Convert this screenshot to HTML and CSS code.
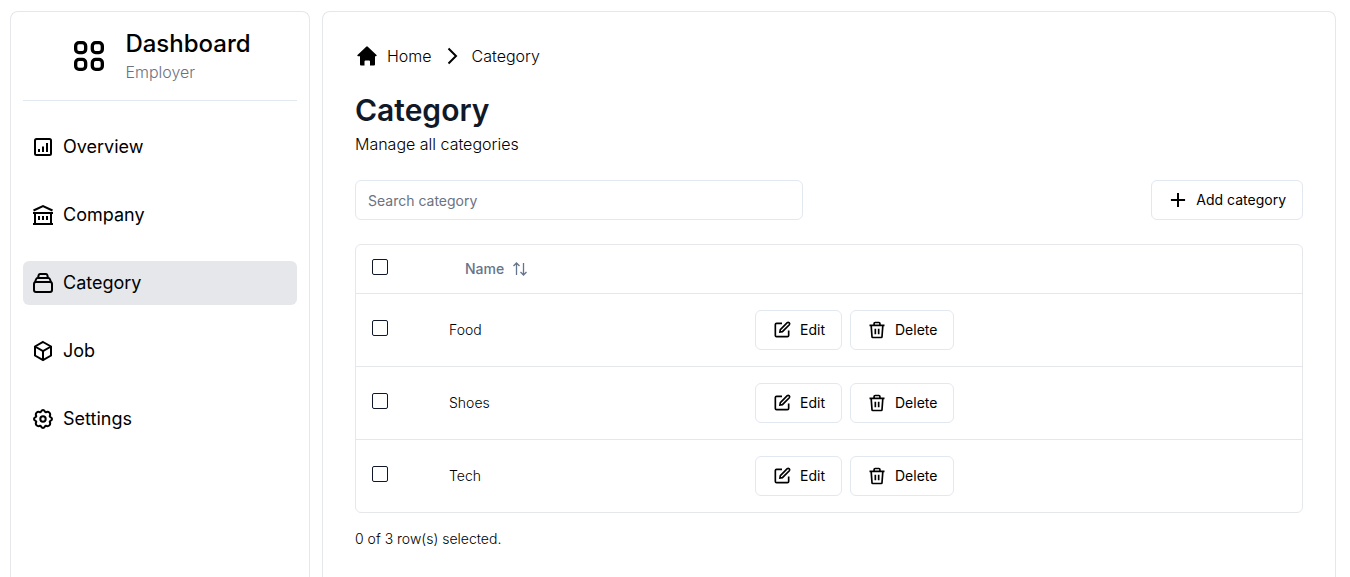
FILE: index.html
```html
<!DOCTYPE html>
<html lang="en">
<head>
<meta charset="utf-8">
<meta name="viewport" content="width=device-width, initial-scale=1">
<title>Category</title>
<link rel="stylesheet" href="styles.css">
</head>
<body>
<svg class="sprite" aria-hidden="true">
  <symbol id="i-edit" viewBox="0 0 24 24"><path d="M12 4H5.500Q4 4 4 5.500V18.500Q4 20 5.500 20H18.500Q20 20 20 18.500V12.500"/><path d="M9.500 14.500L10 11.500L18.300 3.200Q19.500 2.300 20.700 3.400Q21.700 4.600 20.800 5.700L12.500 14L9.500 14.500Z"/></symbol>
  <symbol id="i-trash" viewBox="0 0 24 24"><path d="M3 6.500H21M5 6.500L6 20Q6 21 7 21H17Q18 21 18 20L19 6.500M8.500 6V4.200Q8.500 3 9.700 3H14.300Q15.500 3 15.500 4.200V6M10 10.500V17M14 10.500V17"/></symbol>
</svg>
<div class="layout">
  <aside class="panel sidebar">
    <header class="brand">
      <svg class="icon icon-brand" viewBox="0 0 24 24" aria-hidden="true"><rect x="4" y="4" width="6" height="6" rx="2"/><rect x="14" y="4" width="6" height="6" rx="2"/><rect x="4" y="14" width="6" height="6" rx="2"/><rect x="14" y="14" width="6" height="6" rx="2"/></svg>
      <div>
        <div class="brand-name">Dashboard</div>
        <div class="brand-role">Employer</div>
      </div>
    </header>
    <nav class="nav">
      <a class="nav-link" href="#"><svg class="icon" viewBox="0 0 24 24" aria-hidden="true"><rect x="4" y="4" width="16" height="16" rx="1.500"/><path d="M8 14v3M12 11.500v5.500M16 8v9"/></svg>Overview</a>
      <a class="nav-link" href="#"><svg class="icon" viewBox="0 0 24 24" aria-hidden="true"><path d="M2.500 7.500L12 3L21.500 7.500M2 10h20M4 10v11M20 10v11M2 21h20M8 13v4M12 13v4M16 13v4"/></svg>Company</a>
      <a class="nav-link nav-link-active" href="#" aria-current="page"><svg class="icon" viewBox="0 0 24 24" aria-hidden="true"><rect x="3" y="11" width="18" height="10" rx="2"/><path d="M4 11l1.200-3q.4-1 1.300-1h11q.9 0 1.300 1L20 11M7 7l.7-3q.3-1 1.300-1h6q1 0 1.300 1l.7 3"/></svg>Category</a>
      <a class="nav-link" href="#"><svg class="icon" viewBox="0 0 24 24" aria-hidden="true"><path d="M12 3l8 4.500v9L12 21l-8-4.500v-9zM4 7.500l8 4.500l8-4.500M12 12v9"/></svg>Job</a>
      <a class="nav-link" href="#"><svg class="icon" viewBox="0 0 24 24" aria-hidden="true"><circle cx="12" cy="12" r="2.700"/><path stroke-linejoin="round" d="M9.200 5.300C10.600 4.900 10 3 12 3S13.400 4.900 14.800 5.300C16.100 4.600 17 4.200 18.400 5.600S19.400 7.900 18.700 9.200C19.100 10.600 21 10 21 12S19.100 13.400 18.700 14.800C19.400 16.100 19.800 17 18.400 18.400S16.100 19.400 14.800 18.700C13.400 19.100 14 21 12 21S10.600 19.100 9.200 18.700C7.900 19.400 7 19.800 5.600 18.400S4.600 16.100 5.300 14.800C4.900 13.400 3 14 3 12S4.900 10.600 5.300 9.200C4.600 7.900 4.200 7 5.600 5.600S7.900 4.600 9.200 5.300Z"/></svg>Settings</a>
    </nav>
  </aside>
  <main class="panel main">
    <nav class="breadcrumb" aria-label="Breadcrumb">
      <a class="crumb" href="#"><svg class="icon icon-solid" viewBox="0 0 24 24" aria-hidden="true"><path d="M11.200 2.700Q12 2 12.800 2.700L21.500 11Q22.200 12 21 12.200H20V20.500Q20 21.500 19 21.500H15V17.500Q15 16.500 14 16.500H10.500Q9.500 16.500 9.500 17.500V21.500H6Q5 21.500 5 20.500V12.200H3Q1.800 12 2.500 11Z"/></svg>Home</a>
      <svg class="icon" viewBox="0 0 24 24" aria-hidden="true"><path d="M8.500 4.500L16 12l-7.500 7.500"/></svg>
      <a class="crumb" href="#">Category</a>
    </nav>
    <header class="heading">
      <h1 class="title">Category</h1>
      <p class="subtitle">Manage all categories</p>
    </header>
    <div class="toolbar">
      <input class="search" type="text" placeholder="Search category" aria-label="Search category">
      <button class="button" type="button"><svg class="icon icon-small icon-plus" viewBox="0 0 24 24" aria-hidden="true"><path d="M12 3.500v17M3.500 12h17"/></svg>Add category</button>
    </div>
    <div class="table-frame">
      <table class="table">
        <colgroup><col class="col-check"><col class="col-name"><col></colgroup>
        <thead>
          <tr>
            <th><input class="check" type="checkbox" aria-label="Select all"></th>
            <th><button class="sort" type="button">Name<svg class="icon icon-sort" viewBox="0 0 16 16" aria-hidden="true"><path d="M4.500 14V2M1.500 5l3-3l3 3M11.500 2v12M8.500 11l3 3l3-3"/></svg></button></th>
            <th></th>
          </tr>
        </thead>
        <tbody>
          <tr>
            <td><input class="check" type="checkbox" aria-label="Select Food"></td>
            <td>Food</td>
            <td><div class="actions"><button class="button" type="button"><svg class="icon icon-small" aria-hidden="true"><use href="#i-edit"/></svg>Edit</button><button class="button" type="button"><svg class="icon icon-small" aria-hidden="true"><use href="#i-trash"/></svg>Delete</button></div></td>
          </tr>
          <tr>
            <td><input class="check" type="checkbox" aria-label="Select Shoes"></td>
            <td>Shoes</td>
            <td><div class="actions"><button class="button" type="button"><svg class="icon icon-small" aria-hidden="true"><use href="#i-edit"/></svg>Edit</button><button class="button" type="button"><svg class="icon icon-small" aria-hidden="true"><use href="#i-trash"/></svg>Delete</button></div></td>
          </tr>
          <tr>
            <td><input class="check" type="checkbox" aria-label="Select Tech"></td>
            <td>Tech</td>
            <td><div class="actions"><button class="button" type="button"><svg class="icon icon-small" aria-hidden="true"><use href="#i-edit"/></svg>Edit</button><button class="button" type="button"><svg class="icon icon-small" aria-hidden="true"><use href="#i-trash"/></svg>Delete</button></div></td>
          </tr>
        </tbody>
      </table>
    </div>
    <p class="summary">0 of 3 row(s) selected.</p>
  </main>
</div>
</body>
</html>
```
FILE: styles.css
```css
*, *::before, *::after { box-sizing: border-box; }
body { margin: 0; background: #fff; color: #000; font-family: Inter, "Liberation Sans", sans-serif; font-size: 16px; line-height: 24px; font-weight: 300; }
h1, p { margin: 0; }
a { color: inherit; text-decoration: none; }
button, input { font: inherit; color: inherit; }
.sprite { display: none; }
.layout { display: flex; gap: 12px; min-height: 100vh; padding: 11px 14px 0 10px; }
.panel { border: 1px solid #e5e7eb; border-bottom: 0; border-radius: 8px 8px 0 0; }
.sidebar { flex: 0 0 300px; padding: 12px; }
.main { flex: 1; min-width: 0; padding: 32px; }
.icon { flex: none; width: 24px; height: 24px; fill: none; stroke: currentColor; stroke-width: 2; }
.icon-brand { width: 40px; height: 40px; }
.icon-solid { fill: currentColor; stroke: none; }
.icon-small { width: 20px; height: 20px; }
.icon-plus { stroke-width: 2.4; }
.icon-sort { width: 16px; height: 16px; stroke-width: 1.3; }

.brand { display: flex; align-items: center; justify-content: center; gap: 16px; padding: 4px 0 16px; border-bottom: 1px solid #e2e8f0; }
.brand-name { font-size: 24px; line-height: 32px; font-weight: 500; }
.brand-role { color: #6b7280; }
.nav { display: flex; flex-direction: column; gap: 24px; padding-top: 24px; }
.nav-link { display: flex; align-items: center; gap: 8px; height: 44px; padding: 0 8px; border-radius: 6px; font-size: 18px; font-weight: 400; }
.nav-link-active { background: #e5e7eb; }

.breadcrumb, .crumb { display: flex; align-items: center; gap: 8px; }
.heading { display: grid; gap: 4px; margin: 24px 0; }
.title { color: #111827; font-size: 30px; line-height: 36px; font-weight: 600; }
.toolbar { display: flex; justify-content: space-between; gap: 16px; margin-bottom: 24px; }
.search { flex: 0 1 448px; min-width: 0; height: 40px; padding: 0 12px; border: 1px solid #e2e8f0; border-radius: 6px; background: #fff; font-size: 14px; font-weight: 400; }
.search::placeholder { color: #6b7280; opacity: 1; }
.button { display: inline-flex; align-items: center; gap: 8px; height: 40px; padding: 0 16px; border: 1px solid #e2e8f0; border-radius: 6px; background: #fff; font-size: 14px; line-height: 20px; font-weight: 400; white-space: nowrap; }

.table-frame { border: 1px solid #e5e7eb; border-radius: 6px; }
.table { width: 100%; table-layout: fixed; border-collapse: separate; border-spacing: 0; font-size: 14px; line-height: 20px; }
.col-check { width: 8.14%; }
.col-name { width: 32.35%; }
.table th { height: 49px; padding: 0 16px; border-bottom: 1px solid #e5e7eb; text-align: left; }
.table td { height: 73px; padding: 0 16px; border-bottom: 1px solid #e5e7eb; }
.table tbody tr:last-child td { height: 72px; border-bottom: 0; }
.check { appearance: none; display: block; width: 16px; height: 16px; margin: 0 0 4px; border: 1px solid #0f172a; border-radius: 2px; background: #fff; }
.check:checked { background: #0f172a; }
.sort { display: inline-flex; align-items: center; gap: 8px; height: 40px; padding: 0 16px; border: 0; background: none; color: #64748b; font-weight: 500; }
.actions { display: flex; gap: 8px; }
.summary { margin-top: 16px; font-size: 14px; line-height: 20px; }
```
